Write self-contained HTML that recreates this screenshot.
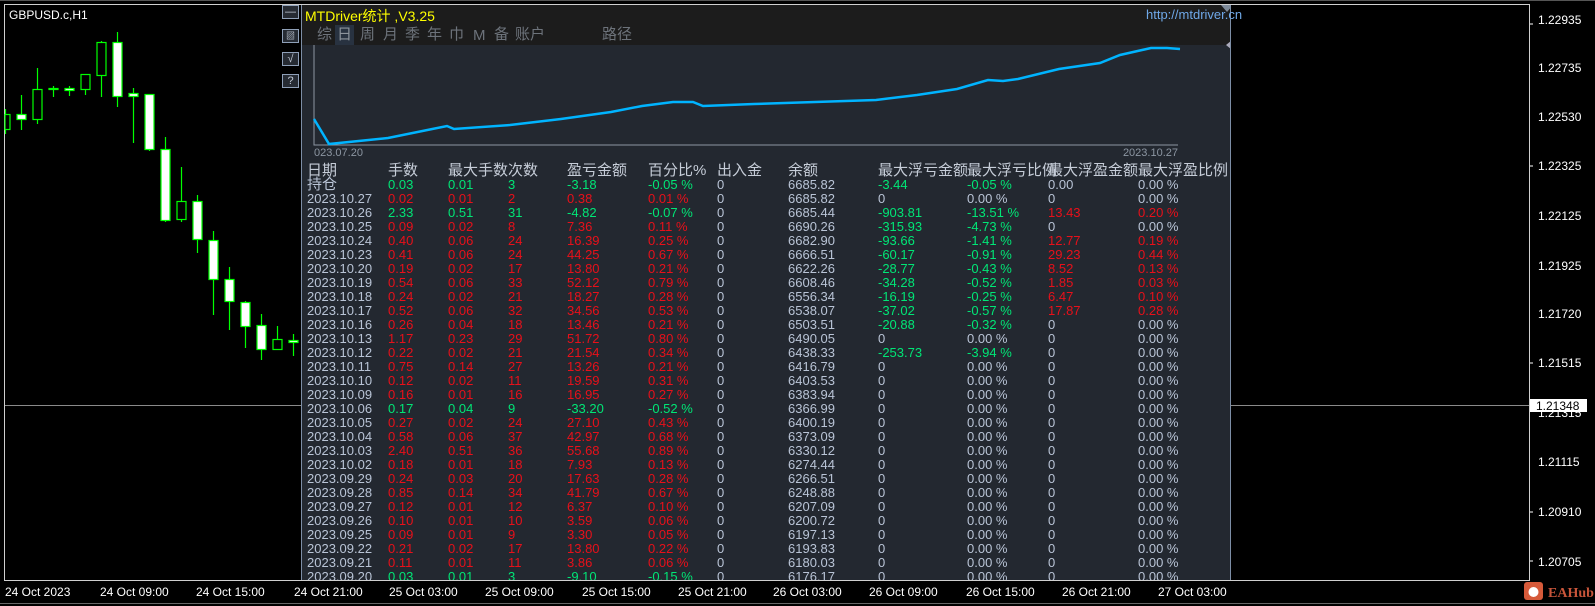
<!DOCTYPE html>
<html><head><meta charset="utf-8"><style>
*{margin:0;padding:0;box-sizing:border-box}
body{width:1595px;height:606px;background:#000;overflow:hidden;position:relative;font-family:"Liberation Sans","Noto Sans CJK SC",sans-serif}
#panel{position:absolute;left:301px;top:5px;width:930px;height:575px;background:#232830;overflow:hidden;border-left:1px solid #7d8ea6;border-right:1px solid #7d8ea6}
#hdr{position:absolute;left:0;top:0;width:100%;height:40px;background:#1c1c1c}
.t{position:absolute;white-space:nowrap}
.r{position:absolute;left:0;height:14px;line-height:14px;font-size:13px;color:#b9c4d6;width:100%}
.r span{position:absolute;white-space:nowrap}
.a{left:5px}.b{left:86px}.c{left:146px}.d{left:206px}.e{left:265px}.f{left:346px}.g{left:415px}.h{left:486px}.i{left:576px}.j{left:665px}.k{left:746px}.l{left:836px}
.R{color:#e8101a}.G{color:#00e676}
.hd span{font-size:15px;color:#c6cdd8}
.btn{position:absolute;left:282px;width:17px;height:14px;border:1px solid #8fa0b8;background:#262b33;color:#c0c8d4;font-size:11px;line-height:12px;text-align:center}
.tab{position:absolute;top:20px;font-size:15px;line-height:20px;color:#6d737b}
</style></head><body>
<svg width="1595" height="606" style="position:absolute;left:0;top:0">
<line x1="0" y1="0.5" x2="1595" y2="0.5" stroke="#555"/>
<line x1="0" y1="603.5" x2="1595" y2="603.5" stroke="#666"/>
<rect x="4.5" y="4.5" width="1525" height="576" fill="none" stroke="#d0d0d0"/>
<line x1="5" y1="405.5" x2="1529" y2="405.5" stroke="#8a8a8a"/>
<g stroke="#00ff00" stroke-width="1.2">
<line x1="5.5" y1="109" x2="5.5" y2="134"/><rect x="5" y="114.5" width="5" height="15" fill="#000"/>
<line x1="21.5" y1="95" x2="21.5" y2="130"/><rect x="17" y="114.5" width="9" height="5" fill="#fff"/>
<line x1="37.5" y1="68" x2="37.5" y2="124"/><rect x="33" y="89.5" width="9" height="30" fill="#000"/>
<line x1="53.5" y1="86" x2="53.5" y2="97"/><rect x="49" y="88.5" width="9" height="1" fill="#fff"/>
<line x1="69.5" y1="86" x2="69.5" y2="96"/><rect x="65" y="88.5" width="9" height="2" fill="#fff"/>
<line x1="85.5" y1="74" x2="85.5" y2="95"/><rect x="81" y="74.5" width="9" height="15" fill="#000"/>
<line x1="101.5" y1="41" x2="101.5" y2="97"/><rect x="97" y="42.5" width="9" height="33" fill="#000"/>
<line x1="117.5" y1="32" x2="117.5" y2="107"/><rect x="113" y="42.5" width="9" height="54" fill="#fff"/>
<line x1="133.5" y1="88" x2="133.5" y2="143"/><rect x="129" y="93.5" width="9" height="3" fill="#fff"/>
<line x1="149.5" y1="94" x2="149.5" y2="151"/><rect x="145" y="94.5" width="9" height="55" fill="#fff"/>
<line x1="165.5" y1="137" x2="165.5" y2="222"/><rect x="161" y="149.5" width="9" height="71" fill="#fff"/>
<line x1="181.5" y1="167" x2="181.5" y2="222"/><rect x="177" y="201.5" width="9" height="18" fill="#000"/>
<line x1="197.5" y1="195" x2="197.5" y2="253"/><rect x="193" y="201.5" width="9" height="38" fill="#fff"/>
<line x1="213.5" y1="231" x2="213.5" y2="315"/><rect x="209" y="240.5" width="9" height="39" fill="#fff"/>
<line x1="229.5" y1="267" x2="229.5" y2="330"/><rect x="225" y="279.5" width="9" height="22" fill="#fff"/>
<line x1="245.5" y1="301" x2="245.5" y2="348"/><rect x="241" y="302.5" width="9" height="24" fill="#fff"/>
<line x1="261.5" y1="314" x2="261.5" y2="360"/><rect x="257" y="325.5" width="9" height="24" fill="#fff"/>
<line x1="277.5" y1="326" x2="277.5" y2="350"/><rect x="273" y="339.5" width="9" height="10" fill="#000"/>
<line x1="293.5" y1="334" x2="293.5" y2="356"/><rect x="289" y="340.5" width="9" height="2" fill="#fff"/>
</g>
<g fill="#fff" font-family="Liberation Sans" font-size="12">
<text x="9" y="19">GBPUSD.c,H1</text>
<text x="1538" y="24">1.22935</text><text x="1538" y="72">1.22735</text><text x="1538" y="121">1.22530</text><text x="1538" y="170">1.22325</text><text x="1538" y="220">1.22125</text><text x="1538" y="270">1.21925</text><text x="1538" y="318">1.21720</text><text x="1538" y="367">1.21515</text><text x="1538" y="417">1.21315</text><text x="1538" y="466">1.21115</text><text x="1538" y="516">1.20910</text><text x="1538" y="566">1.20705</text>
<text x="5" y="596">24 Oct 2023</text><text x="100" y="596">24 Oct 09:00</text><text x="196" y="596">24 Oct 15:00</text><text x="294" y="596">24 Oct 21:00</text><text x="389" y="596">25 Oct 03:00</text><text x="485" y="596">25 Oct 09:00</text><text x="582" y="596">25 Oct 15:00</text><text x="678" y="596">25 Oct 21:00</text><text x="773" y="596">26 Oct 03:00</text><text x="869" y="596">26 Oct 09:00</text><text x="966" y="596">26 Oct 15:00</text><text x="1062" y="596">26 Oct 21:00</text><text x="1158" y="596">27 Oct 03:00</text>
</g>
<g stroke="#fff"><line x1="1530" y1="24" x2="1533" y2="24"/><line x1="1530" y1="166" x2="1533" y2="166"/><line x1="1530" y1="363" x2="1533" y2="363"/><line x1="1530" y1="561" x2="1533" y2="561"/><line x1="1530" y1="512" x2="1533" y2="512"/></g>
<rect x="1530" y="399" width="57" height="13" fill="#fff"/>
<text x="1536" y="410" font-family="Liberation Sans" font-size="12" fill="#000">1.21348</text>
<rect x="1524" y="582" width="19" height="18" rx="3" fill="#d65a3a"/>
<circle cx="1533.5" cy="592" r="5" fill="#fff"/>
<text x="1548" y="597" font-family="Liberation Serif" font-size="14" font-weight="bold" fill="#c8553a">EAHub</text>
</svg>
<div class="btn" style="top:5px">—</div>
<div class="btn" style="top:29px;font-size:9px">▨</div>
<div class="btn" style="top:52px">√</div>
<div class="btn" style="top:74px">?</div>
<div id="panel">
<div id="hdr"></div>
<div class="t" style="left:3px;top:1px;font-size:14px;color:#ffff00">MTDriver统计 ,V3.25</div>
<div class="tab" style="left:15px">综</div>
<div class="tab" style="left:33px;background:#283240;color:#8d949c;padding:0 2px">日</div>
<div class="tab" style="left:58px">周</div>
<div class="tab" style="left:81px">月</div>
<div class="tab" style="left:103px">季</div>
<div class="tab" style="left:125px">年</div>
<div class="tab" style="left:147px">巾</div>
<div class="tab" style="left:171px;top:21px">M</div>
<div class="tab" style="left:192px">备</div>
<div class="tab" style="left:213px">账户</div>
<div class="tab" style="left:300px">路径</div>
<svg width="930" height="160" style="position:absolute;left:0;top:0">
<polyline points="12,40 12,140 876,140" fill="none" stroke="#8c96a2" stroke-width="1"/>
<polyline fill="none" stroke="#00b4ff" stroke-width="2.5" points="12,114 27,139 86,133 145,121 152,124 208,120 259,114 309,107 340,101 371,97 391,97 401,101 452,99 513,97 574,95 615,90 655,84 686,75 701,76 716,74 757,64 798,58 818,50 849,43 865,43 878,44"/>
<text x="12" y="151" font-family="Liberation Sans" font-size="11" fill="#8c96a2">023.07.20</text>
<text x="876" y="151" font-family="Liberation Sans" font-size="11" fill="#8c96a2" text-anchor="end">2023.10.27</text>
<polygon points="919,0 931,0 925,7" fill="#7d8a99"/>
<polygon points="929,36 929,44 924,40" fill="#aab"/>
</svg>
<div class="r hd" style="top:158px;height:16px;line-height:16px"><span class="a">日期</span><span class="b">手数</span><span class="c">最大手数次数</span><span class="e">盈亏金额</span><span class="f">百分比%</span><span class="g">出入金</span><span class="h">余额</span><span class="i">最大浮亏金额</span><span class="j">最大浮亏比例</span><span class="k">最大浮盈金额</span><span class="l">最大浮盈比例</span></div>
<div class="r" style="top:173px"><span class="a" style="font-size:15px">持仓</span><span class="b G">0.03</span><span class="c G">0.01</span><span class="d G">3</span><span class="e G">-3.18</span><span class="f G">-0.05 %</span><span class="g">0</span><span class="h">6685.82</span><span class="i G">-3.44</span><span class="j G">-0.05 %</span><span class="k">0.00</span><span class="l">0.00 %</span></div>
<div class="r" style="top:187px"><span class="a">2023.10.27</span><span class="b R">0.02</span><span class="c R">0.01</span><span class="d R">2</span><span class="e R">0.38</span><span class="f R">0.01 %</span><span class="g">0</span><span class="h">6685.82</span><span class="i">0</span><span class="j">0.00 %</span><span class="k">0</span><span class="l">0.00 %</span></div>
<div class="r" style="top:201px"><span class="a">2023.10.26</span><span class="b G">2.33</span><span class="c G">0.51</span><span class="d G">31</span><span class="e G">-4.82</span><span class="f G">-0.07 %</span><span class="g">0</span><span class="h">6685.44</span><span class="i G">-903.81</span><span class="j G">-13.51 %</span><span class="k R">13.43</span><span class="l R">0.20 %</span></div>
<div class="r" style="top:215px"><span class="a">2023.10.25</span><span class="b R">0.09</span><span class="c R">0.02</span><span class="d R">8</span><span class="e R">7.36</span><span class="f R">0.11 %</span><span class="g">0</span><span class="h">6690.26</span><span class="i G">-315.93</span><span class="j G">-4.73 %</span><span class="k">0</span><span class="l">0.00 %</span></div>
<div class="r" style="top:229px"><span class="a">2023.10.24</span><span class="b R">0.40</span><span class="c R">0.06</span><span class="d R">24</span><span class="e R">16.39</span><span class="f R">0.25 %</span><span class="g">0</span><span class="h">6682.90</span><span class="i G">-93.66</span><span class="j G">-1.41 %</span><span class="k R">12.77</span><span class="l R">0.19 %</span></div>
<div class="r" style="top:243px"><span class="a">2023.10.23</span><span class="b R">0.41</span><span class="c R">0.06</span><span class="d R">24</span><span class="e R">44.25</span><span class="f R">0.67 %</span><span class="g">0</span><span class="h">6666.51</span><span class="i G">-60.17</span><span class="j G">-0.91 %</span><span class="k R">29.23</span><span class="l R">0.44 %</span></div>
<div class="r" style="top:257px"><span class="a">2023.10.20</span><span class="b R">0.19</span><span class="c R">0.02</span><span class="d R">17</span><span class="e R">13.80</span><span class="f R">0.21 %</span><span class="g">0</span><span class="h">6622.26</span><span class="i G">-28.77</span><span class="j G">-0.43 %</span><span class="k R">8.52</span><span class="l R">0.13 %</span></div>
<div class="r" style="top:271px"><span class="a">2023.10.19</span><span class="b R">0.54</span><span class="c R">0.06</span><span class="d R">33</span><span class="e R">52.12</span><span class="f R">0.79 %</span><span class="g">0</span><span class="h">6608.46</span><span class="i G">-34.28</span><span class="j G">-0.52 %</span><span class="k R">1.85</span><span class="l R">0.03 %</span></div>
<div class="r" style="top:285px"><span class="a">2023.10.18</span><span class="b R">0.24</span><span class="c R">0.02</span><span class="d R">21</span><span class="e R">18.27</span><span class="f R">0.28 %</span><span class="g">0</span><span class="h">6556.34</span><span class="i G">-16.19</span><span class="j G">-0.25 %</span><span class="k R">6.47</span><span class="l R">0.10 %</span></div>
<div class="r" style="top:299px"><span class="a">2023.10.17</span><span class="b R">0.52</span><span class="c R">0.06</span><span class="d R">32</span><span class="e R">34.56</span><span class="f R">0.53 %</span><span class="g">0</span><span class="h">6538.07</span><span class="i G">-37.02</span><span class="j G">-0.57 %</span><span class="k R">17.87</span><span class="l R">0.28 %</span></div>
<div class="r" style="top:313px"><span class="a">2023.10.16</span><span class="b R">0.26</span><span class="c R">0.04</span><span class="d R">18</span><span class="e R">13.46</span><span class="f R">0.21 %</span><span class="g">0</span><span class="h">6503.51</span><span class="i G">-20.88</span><span class="j G">-0.32 %</span><span class="k">0</span><span class="l">0.00 %</span></div>
<div class="r" style="top:327px"><span class="a">2023.10.13</span><span class="b R">1.17</span><span class="c R">0.23</span><span class="d R">29</span><span class="e R">51.72</span><span class="f R">0.80 %</span><span class="g">0</span><span class="h">6490.05</span><span class="i">0</span><span class="j">0.00 %</span><span class="k">0</span><span class="l">0.00 %</span></div>
<div class="r" style="top:341px"><span class="a">2023.10.12</span><span class="b R">0.22</span><span class="c R">0.02</span><span class="d R">21</span><span class="e R">21.54</span><span class="f R">0.34 %</span><span class="g">0</span><span class="h">6438.33</span><span class="i G">-253.73</span><span class="j G">-3.94 %</span><span class="k">0</span><span class="l">0.00 %</span></div>
<div class="r" style="top:355px"><span class="a">2023.10.11</span><span class="b R">0.75</span><span class="c R">0.14</span><span class="d R">27</span><span class="e R">13.26</span><span class="f R">0.21 %</span><span class="g">0</span><span class="h">6416.79</span><span class="i">0</span><span class="j">0.00 %</span><span class="k">0</span><span class="l">0.00 %</span></div>
<div class="r" style="top:369px"><span class="a">2023.10.10</span><span class="b R">0.12</span><span class="c R">0.02</span><span class="d R">11</span><span class="e R">19.59</span><span class="f R">0.31 %</span><span class="g">0</span><span class="h">6403.53</span><span class="i">0</span><span class="j">0.00 %</span><span class="k">0</span><span class="l">0.00 %</span></div>
<div class="r" style="top:383px"><span class="a">2023.10.09</span><span class="b R">0.16</span><span class="c R">0.01</span><span class="d R">16</span><span class="e R">16.95</span><span class="f R">0.27 %</span><span class="g">0</span><span class="h">6383.94</span><span class="i">0</span><span class="j">0.00 %</span><span class="k">0</span><span class="l">0.00 %</span></div>
<div class="r" style="top:397px"><span class="a">2023.10.06</span><span class="b G">0.17</span><span class="c G">0.04</span><span class="d G">9</span><span class="e G">-33.20</span><span class="f G">-0.52 %</span><span class="g">0</span><span class="h">6366.99</span><span class="i">0</span><span class="j">0.00 %</span><span class="k">0</span><span class="l">0.00 %</span></div>
<div class="r" style="top:411px"><span class="a">2023.10.05</span><span class="b R">0.27</span><span class="c R">0.02</span><span class="d R">24</span><span class="e R">27.10</span><span class="f R">0.43 %</span><span class="g">0</span><span class="h">6400.19</span><span class="i">0</span><span class="j">0.00 %</span><span class="k">0</span><span class="l">0.00 %</span></div>
<div class="r" style="top:425px"><span class="a">2023.10.04</span><span class="b R">0.58</span><span class="c R">0.06</span><span class="d R">37</span><span class="e R">42.97</span><span class="f R">0.68 %</span><span class="g">0</span><span class="h">6373.09</span><span class="i">0</span><span class="j">0.00 %</span><span class="k">0</span><span class="l">0.00 %</span></div>
<div class="r" style="top:439px"><span class="a">2023.10.03</span><span class="b R">2.40</span><span class="c R">0.51</span><span class="d R">36</span><span class="e R">55.68</span><span class="f R">0.89 %</span><span class="g">0</span><span class="h">6330.12</span><span class="i">0</span><span class="j">0.00 %</span><span class="k">0</span><span class="l">0.00 %</span></div>
<div class="r" style="top:453px"><span class="a">2023.10.02</span><span class="b R">0.18</span><span class="c R">0.01</span><span class="d R">18</span><span class="e R">7.93</span><span class="f R">0.13 %</span><span class="g">0</span><span class="h">6274.44</span><span class="i">0</span><span class="j">0.00 %</span><span class="k">0</span><span class="l">0.00 %</span></div>
<div class="r" style="top:467px"><span class="a">2023.09.29</span><span class="b R">0.24</span><span class="c R">0.03</span><span class="d R">20</span><span class="e R">17.63</span><span class="f R">0.28 %</span><span class="g">0</span><span class="h">6266.51</span><span class="i">0</span><span class="j">0.00 %</span><span class="k">0</span><span class="l">0.00 %</span></div>
<div class="r" style="top:481px"><span class="a">2023.09.28</span><span class="b R">0.85</span><span class="c R">0.14</span><span class="d R">34</span><span class="e R">41.79</span><span class="f R">0.67 %</span><span class="g">0</span><span class="h">6248.88</span><span class="i">0</span><span class="j">0.00 %</span><span class="k">0</span><span class="l">0.00 %</span></div>
<div class="r" style="top:495px"><span class="a">2023.09.27</span><span class="b R">0.12</span><span class="c R">0.01</span><span class="d R">12</span><span class="e R">6.37</span><span class="f R">0.10 %</span><span class="g">0</span><span class="h">6207.09</span><span class="i">0</span><span class="j">0.00 %</span><span class="k">0</span><span class="l">0.00 %</span></div>
<div class="r" style="top:509px"><span class="a">2023.09.26</span><span class="b R">0.10</span><span class="c R">0.01</span><span class="d R">10</span><span class="e R">3.59</span><span class="f R">0.06 %</span><span class="g">0</span><span class="h">6200.72</span><span class="i">0</span><span class="j">0.00 %</span><span class="k">0</span><span class="l">0.00 %</span></div>
<div class="r" style="top:523px"><span class="a">2023.09.25</span><span class="b R">0.09</span><span class="c R">0.01</span><span class="d R">9</span><span class="e R">3.30</span><span class="f R">0.05 %</span><span class="g">0</span><span class="h">6197.13</span><span class="i">0</span><span class="j">0.00 %</span><span class="k">0</span><span class="l">0.00 %</span></div>
<div class="r" style="top:537px"><span class="a">2023.09.22</span><span class="b R">0.21</span><span class="c R">0.02</span><span class="d R">17</span><span class="e R">13.80</span><span class="f R">0.22 %</span><span class="g">0</span><span class="h">6193.83</span><span class="i">0</span><span class="j">0.00 %</span><span class="k">0</span><span class="l">0.00 %</span></div>
<div class="r" style="top:551px"><span class="a">2023.09.21</span><span class="b R">0.11</span><span class="c R">0.01</span><span class="d R">11</span><span class="e R">3.86</span><span class="f R">0.06 %</span><span class="g">0</span><span class="h">6180.03</span><span class="i">0</span><span class="j">0.00 %</span><span class="k">0</span><span class="l">0.00 %</span></div>
<div class="r" style="top:565px"><span class="a">2023.09.20</span><span class="b G">0.03</span><span class="c G">0.01</span><span class="d G">3</span><span class="e G">-9.10</span><span class="f G">-0.15 %</span><span class="g">0</span><span class="h">6176.17</span><span class="i">0</span><span class="j">0.00 %</span><span class="k">0</span><span class="l">0.00 %</span></div>
</div>
<div class="t" style="left:1146px;top:7px;font-size:13px;color:#6fa8e8">http://mtdriver.cn</div>
</body></html>
